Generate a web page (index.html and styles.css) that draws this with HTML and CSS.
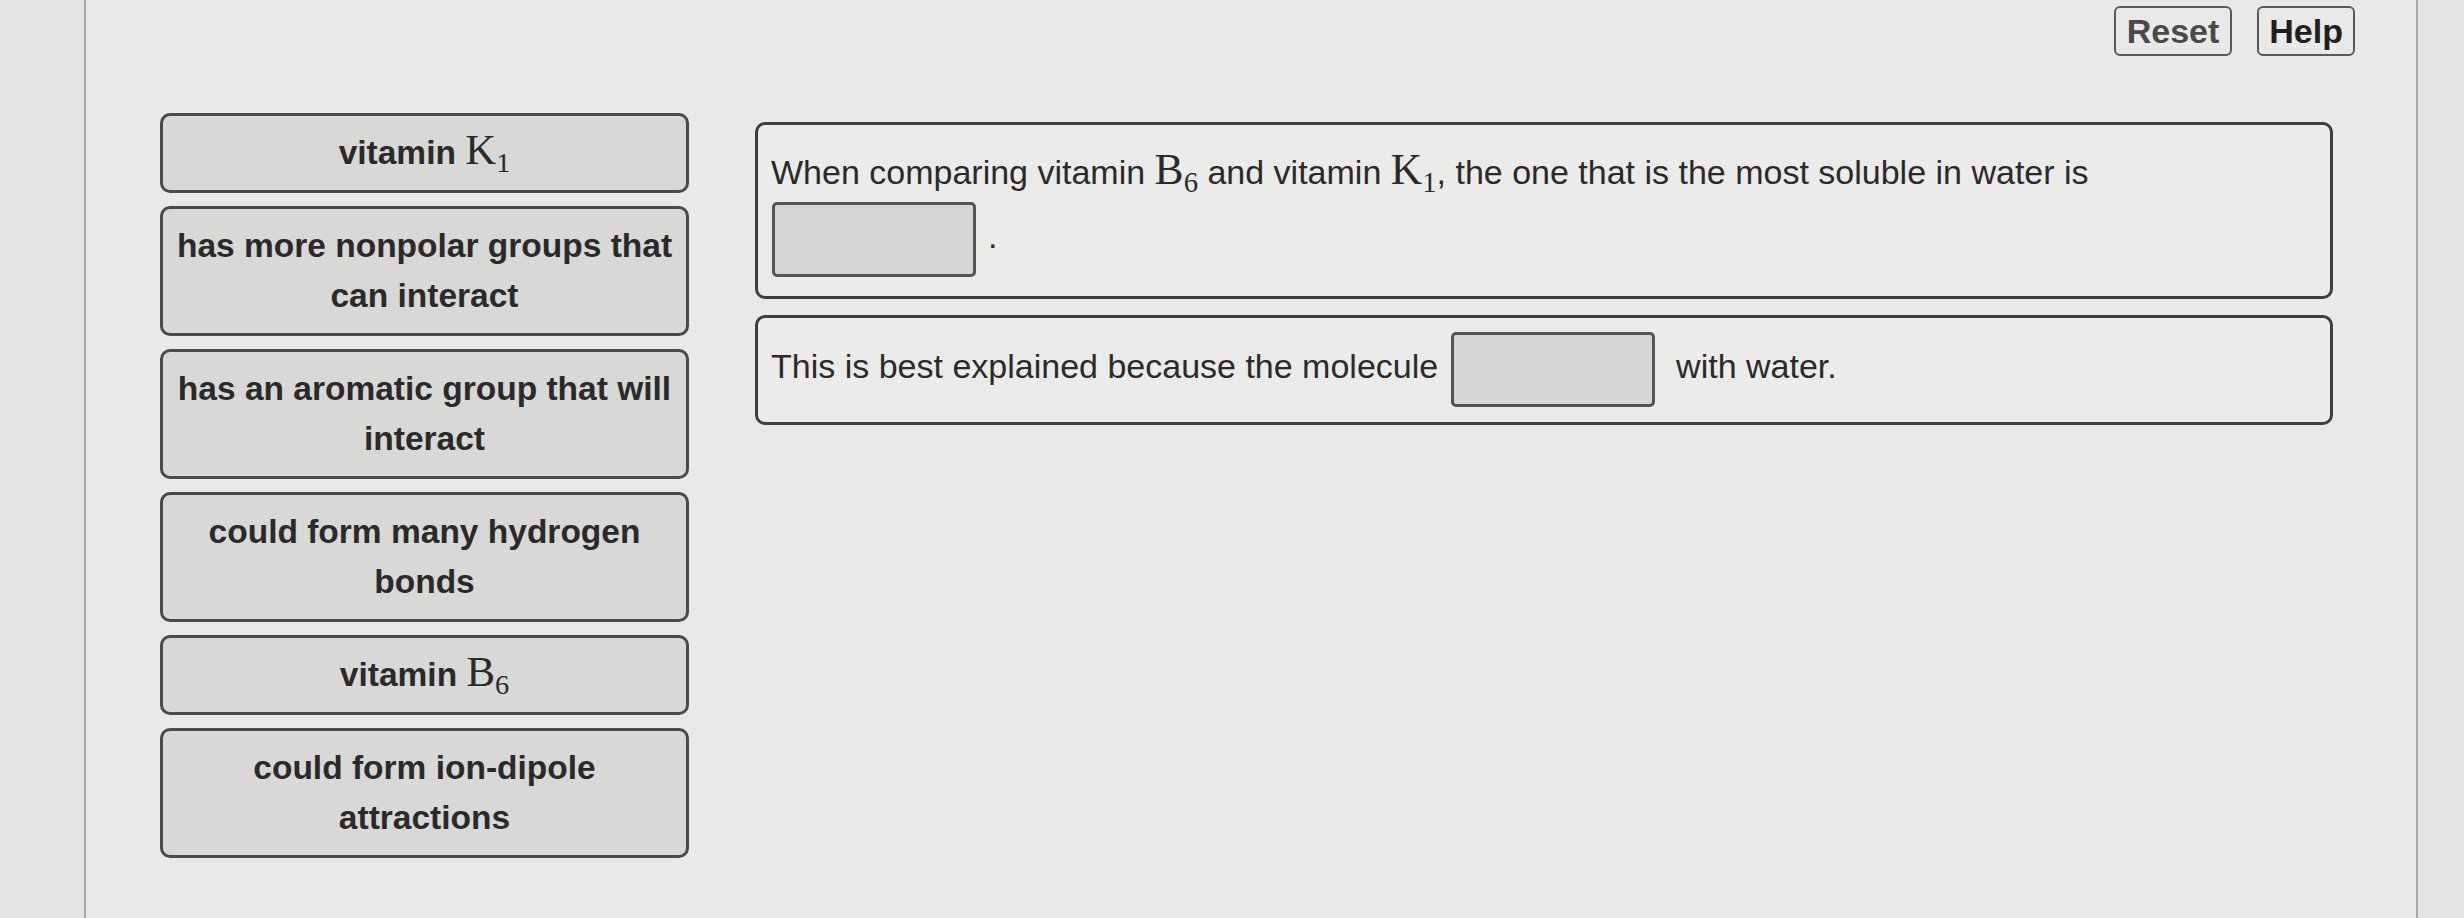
FILE: index.html
```html
<!DOCTYPE html>
<html lang="en">
<head>
<meta charset="utf-8">
<title>Drag and drop</title>
<link rel="stylesheet" href="styles.css">
</head>
<body>
<div class="screen">
  <div class="gutter"></div>
  <div class="main">
    <div class="toolbar">
      <button class="btn btn-reset">Reset</button>
      <button class="btn btn-help">Help</button>
    </div>
    <div class="workspace">
      <div class="bank">
        <div class="tile">vitamin <span class="math">K<sub>1</sub></span></div>
        <div class="tile">has more nonpolar groups that can interact</div>
        <div class="tile">has an aromatic group that will interact</div>
        <div class="tile">could form many hydrogen bonds</div>
        <div class="tile">vitamin <span class="math">B<sub>6</sub></span></div>
        <div class="tile">could form ion-dipole attractions</div>
      </div>
      <div class="targets">
        <div class="stmt stmt-first">When comparing vitamin <span class="math">B<sub>6</sub></span> and vitamin <span class="math">K<sub>1</sub></span>, the one that is the most soluble in water is<br><span class="blank"></span>.</div>
        <div class="stmt stmt-second">This is best explained because the molecule <span class="blank"></span> with water.</div>
      </div>
    </div>
  </div>
  <div class="gutter"></div>
</div>
</body>
</html>
```
FILE: styles.css
```css
html, body {
  margin: 0;
  padding: 0;
}
body {
  background: #e3e3e1;
  font-family: "Liberation Sans", Arial, sans-serif;
  color: #2b2b2b;
  overflow: hidden;
}
.screen {
  display: flex;
  height: 918px;
}
.gutter {
  flex: 1 1 0;
  background: #e3e3e1;
}
.gutter:first-child {
  flex: 0 0 84px;
}
.main {
  flex: 0 0 2334px;
  box-sizing: border-box;
  border-left: 2px solid #a9a9a7;
  border-right: 2px solid #a9a9a7;
  background: #e9e9e7;
  display: flex;
  flex-direction: column;
}
.toolbar {
  display: flex;
  justify-content: flex-end;
  gap: 25px;
  padding: 6px 61px 0 0;
}
.btn {
  font-family: "Liberation Sans", Arial, sans-serif;
  font-weight: bold;
  font-size: 34px;
  line-height: 46px;
  height: 50px;
  box-sizing: border-box;
  padding: 0 11px;
  background: #e9e9e7;
  border: 2px solid #5a5a5a;
  border-radius: 6px;
}
.btn-reset {
  color: #4a4a4a;
}
.btn-help {
  color: #1f1f1f;
  padding: 0 10px;
}
.workspace {
  display: flex;
  align-items: flex-start;
  gap: 66px;
  margin-top: 57px;
  padding-left: 74px;
}
.bank {
  flex: 0 0 529px;
  display: flex;
  flex-direction: column;
  gap: 13px;
}
.tile {
  box-sizing: border-box;
  border: 3px solid #4a4a4a;
  border-radius: 10px;
  background: #d8d8d6;
  padding: 12px 10px;
  text-align: center;
  font-weight: bold;
  font-size: 33.5px;
  line-height: 50px;
  color: #2a2a2a;
}
.math {
  font-family: "Liberation Serif", "Times New Roman", serif;
  font-weight: normal;
  font-size: 1.28em;
  line-height: 0;
}
.math sub {
  font-size: 0.66em;
  line-height: 0;
  vertical-align: -0.28em;
}
.targets {
  flex: 0 0 1578px;
  display: flex;
  flex-direction: column;
  gap: 16px;
  margin-top: 9px;
}
.stmt {
  box-sizing: border-box;
  border: 3px solid #3f3f3f;
  border-radius: 10px;
  background: #ebebe9;
  font-size: 34px;
  line-height: 60px;
  color: #2a2a2a;
  padding: 0 13px;
}
.stmt-first {
  padding-top: 17px;
  padding-bottom: 19px;
}
.stmt-second {
  padding-top: 14px;
  padding-bottom: 15px;
}
.blank {
  display: inline-block;
  box-sizing: border-box;
  width: 204px;
  height: 75px;
  vertical-align: middle;
  margin: 0 12px 0 3px;
  background: #d5d5d3;
  border: 3px solid #545454;
  border-radius: 5px;
}
.stmt-first .blank {
  margin-left: 1px;
}
```
